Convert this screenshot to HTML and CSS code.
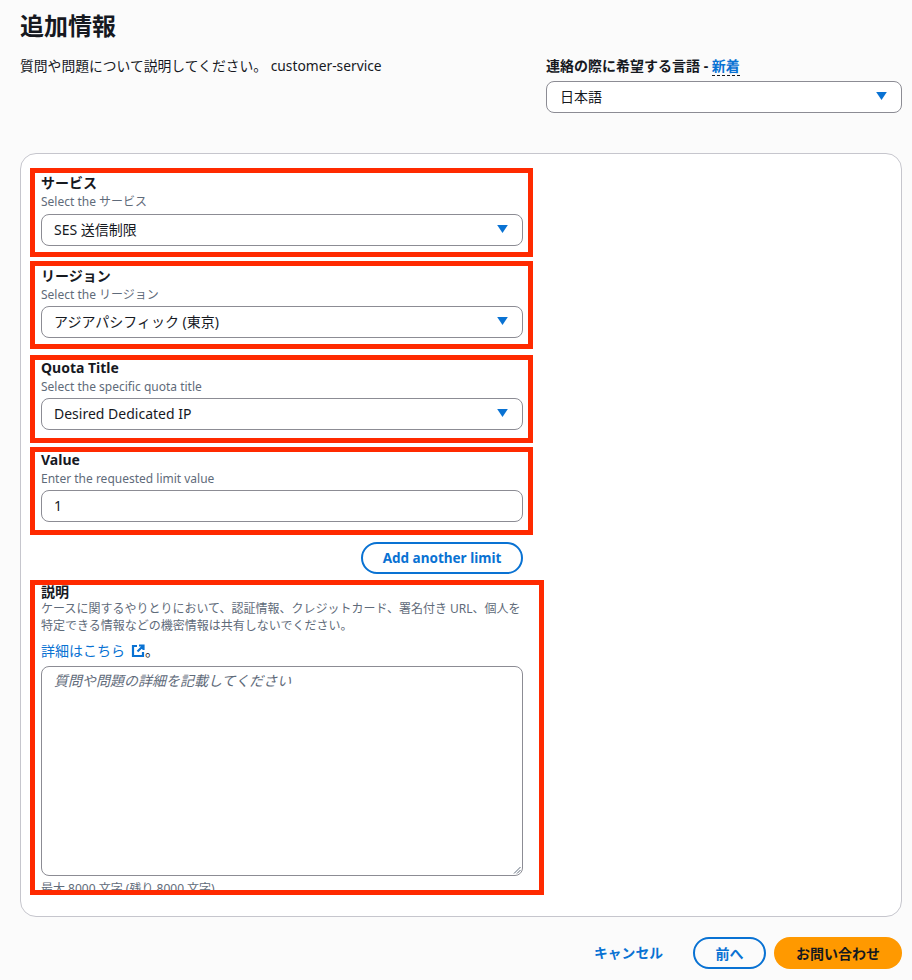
FILE: index.html
```html
<!DOCTYPE html>
<html lang="ja">
<head>
<meta charset="utf-8">
<title>追加情報</title>
<link rel="stylesheet" href="styles.css">
</head>
<body>
<main class="page">
  <h1 class="title">追加情報</h1>
  <div class="intro">
    <p class="intro-text">質問や問題について説明してください。 customer-service</p>
    <div class="lang">
      <div class="lang-label">連絡の際に希望する言語 - <span class="new">新着</span></div>
      <div class="select"><span>日本語</span><svg class="caret" viewBox="0 0 12 9"><path d="M0 0h12L6 9z"/></svg></div>
    </div>
  </div>
  <section class="card">
    <div class="field">
      <div class="label">サービス</div>
      <div class="hint">Select the サービス</div>
      <div class="select"><span>SES 送信制限</span><svg class="caret" viewBox="0 0 12 9"><path d="M0 0h12L6 9z"/></svg></div>
    </div>
    <div class="field field-tight">
      <div class="label">リージョン</div>
      <div class="hint">Select the リージョン</div>
      <div class="select"><span>アジアパシフィック (東京)</span><svg class="caret" viewBox="0 0 12 9"><path d="M0 0h12L6 9z"/></svg></div>
    </div>
    <div class="field field-tight field-high">
      <div class="label">Quota Title</div>
      <div class="hint">Select the specific quota title</div>
      <div class="select"><span>Desired Dedicated IP</span><svg class="caret" viewBox="0 0 12 9"><path d="M0 0h12L6 9z"/></svg></div>
    </div>
    <div class="field field-tight field-high">
      <div class="label">Value</div>
      <div class="hint">Enter the requested limit value</div>
      <div class="select"><span>1</span></div>
    </div>
    <div class="add-row"><button class="btn btn-outline add">Add another limit</button></div>
    <div class="desc">
      <div class="label desc-label">説明</div>
      <div class="hint desc-hint">ケースに関するやりとりにおいて、認証情報、クレジットカード、署名付き URL、個人を特定できる情報などの機密情報は共有しないでください。</div>
      <div class="more"><span class="link">詳細はこちら</span><svg class="ext" viewBox="0 0 14 14"><path d="M6 2H2v10h10V8M8 1.500h4.500V6M12 2L6.500 7.500"/></svg>。</div>
      <div class="textarea">
        <span class="placeholder">質問や問題の詳細を記載してください</span>
        <svg class="grip" viewBox="0 0 8 8"><path d="M1 7.500L7.500 1M4 7.500L7.500 4"/></svg>
      </div>
      <div class="hint count">最大 8000 文字 (残り 8000 文字)</div>
    </div>
  </section>
  <footer class="actions">
    <span class="cancel">キャンセル</span>
    <button class="btn btn-outline prev">前へ</button>
    <button class="btn btn-primary">お問い合わせ</button>
  </footer>
</main>
</body>
</html>
```
FILE: styles.css
```css
* { box-sizing: border-box; }
html, body { margin: 0; height: 980px; overflow: hidden; }
body {
  background: #fbfbfb;
  color: #16191f;
  font-family: "Noto Sans", "Noto Sans CJK JP", sans-serif;
  font-size: 14px;
}
.page { padding: 10px 10px 0 20px; }
.title { margin: 0; font-size: 24px; font-weight: 700; line-height: 32px; }
.intro { display: flex; justify-content: space-between; margin-top: 14px; height: 97px; }
.intro-text { margin: 0; font-size: 13.800px; line-height: 20px; }
.lang { width: 356px; }
.lang-label { font-size: 14px; font-weight: 700; line-height: 20px; height: 25px; }
.new { color: #0972d3; border-bottom: 1px dashed #16191f; }
.select {
  display: flex; align-items: center; justify-content: space-between;
  height: 32px; padding: 0 14px 2px 12px;
  background: #fff; border: 1px solid #8c8c94; border-radius: 8px;
  font-size: 14px;
}
.lang .select { padding-left: 13px; }
.caret { width: 11px; height: 8px; fill: #0972d3; }
.card {
  height: 764px; padding: 14px 10px 0 9px;
  background: #fff; border: 1px solid #c6c6cd; border-radius: 16px;
}
.field {
  width: 503px; height: 89px; margin-bottom: 4px; padding: 1px 5px 0 6px;
  border: 5px solid #ff2a00;
}
.label { font-size: 14px; font-weight: 700; line-height: 18px; }
.hint { font-size: 12px; line-height: 16px; color: #5f6b7a; margin: 2px 0 4px; }
.field-tight { height: 88px; margin-bottom: 6px; }
.field-tight .hint { margin-bottom: 3px; }
.field-high { margin-bottom: 4px; }
.field-high .label { margin-top: -2px; }
.add-row { width: 493px; display: flex; justify-content: flex-end; margin-top: 7px; }
.btn { font-family: inherit; font-size: 14px; font-weight: 700; border-radius: 16px; height: 32px; padding: 0; }
.btn-outline { background: transparent; border: 2px solid #0972d3; color: #0972d3; }
.add { width: 162px; font-size: 13.500px; }
.desc {
  width: 514px; height: 315px; margin-top: 6px; padding: 0 15px 0 6px;
  border: 5px solid #ff2a00; overflow: hidden;
}
.desc-label { line-height: 14px; }
.desc-hint { line-height: 17px; margin: 1px 0 0; font-size: 12px; }
.more { margin-top: 8px; font-size: 14px; line-height: 18px; display: flex; align-items: center; }
.link { color: #0972d3; }
.ext { width: 14px; height: 14px; margin-left: 6px; fill: none; stroke: #0972d3; stroke-width: 2.200; }
.textarea {
  position: relative; width: 482px; height: 210px; margin-top: 6px; padding: 3px 12px;
  background: #fff; border: 1px solid #8c8c94; border-radius: 8px;
}
.placeholder { font-size: 14px; font-style: italic; color: #5f6b7a; }
.grip { position: absolute; right: 1px; bottom: 1px; width: 8px; height: 8px; fill: none; stroke: #5f6b7a; stroke-width: 1; }
.count { margin: 5px 0 0; }
.actions { display: flex; justify-content: flex-end; align-items: center; margin-top: 20px; }
.cancel { color: #0972d3; font-weight: 700; font-size: 13.800px; margin-right: 30px; padding-bottom: 2px; }
.prev { width: 73px; margin-right: 8px; }
.btn-primary { width: 128px; background: #ff9900; border: 0; color: #16191f; }
```
